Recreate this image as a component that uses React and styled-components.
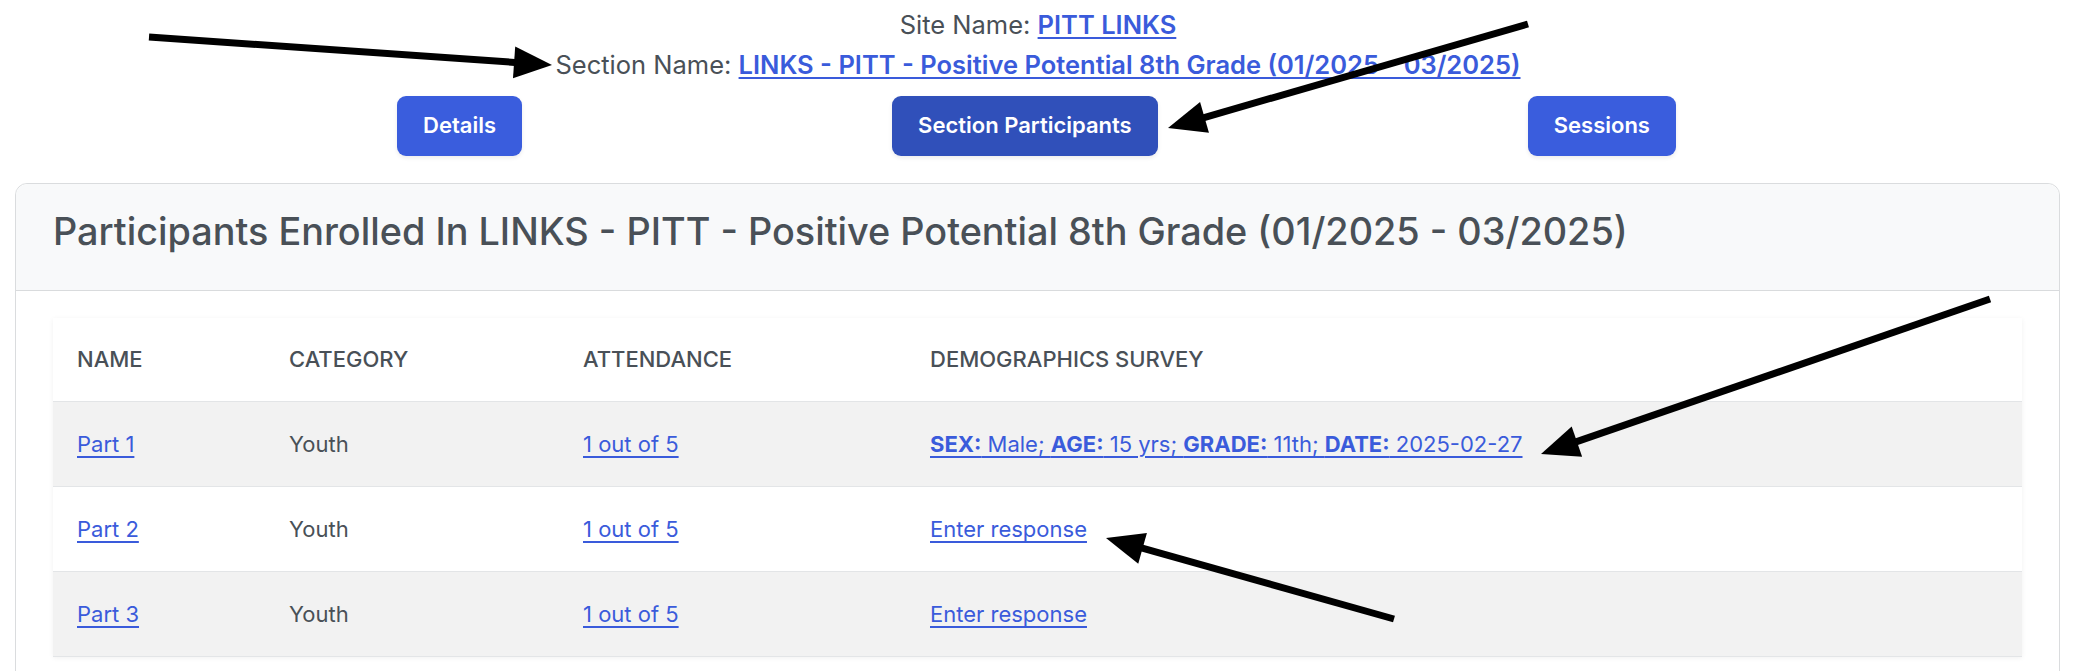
import React from 'react';
import styled, { createGlobalStyle } from 'styled-components';

const GlobalStyle = createGlobalStyle`
  body {
    margin: 0;
    background: #fff;
    font-family: Inter, "Noto Sans", sans-serif;
    color: #495057;
  }
`;

const StyledPage = styled.div`
  position: relative;
  width: 100%;
  padding-top: 5px;
  overflow: hidden;
`;

const StyledInfo = styled.div`
  text-align: center;
  font-size: 25.5px;
  line-height: 40px;
  color: #495057;
`;

const StyledInfoLink = styled.a`
  color: #3a5bdb;
  font-weight: 600;
  text-decoration: underline;
  text-underline-offset: 3px;
  text-decoration-thickness: 2px;
`;

const StyledNav = styled.div`
  display: flex;
  justify-content: space-evenly;
  margin: 11px 30px 0 27px;
`;

const StyledNavButton = styled.a`
  display: inline-block;
  padding: 14px 26px;
  font-size: 22px;
  line-height: 31.5px;
  font-weight: 600;
  color: #fff;
  border-radius: 9px;
  background: ${({ $active }) => ($active ? '#3050ba' : '#3a5ddd')};
  box-shadow: 0 2px 4px rgba(0, 0, 0, 0.08);
  text-decoration: none;
`;

const StyledCard = styled.div`
  margin: 27px 16px 0 15px;
  border: 1.5px solid #dadcde;
  border-radius: 12px;
  background: #fff;
`;

const StyledCardHeader = styled.div`
  background: #f8f9fa;
  border-bottom: 1.5px solid #d9dbdd;
  border-radius: 12px 12px 0 0;
  padding: 24px 37px 0;
  height: 107px;
  box-sizing: border-box;
`;

const StyledTitle = styled.h2`
  margin: 0;
  font-size: 37.8px;
  line-height: 46px;
  font-weight: 500;
  color: #495057;
`;

const StyledCardBody = styled.div`
  padding: 27px 37px 40px;
`;

const StyledTable = styled.table`
  width: 100%;
  border-collapse: collapse;
  box-shadow: 0 1px 5px rgba(0, 0, 0, 0.06);
  font-size: 22px;
  table-layout: fixed;
`;

const StyledHeadCell = styled.th`
  text-align: left;
  font-weight: 500;
  text-transform: uppercase;
  color: #495057;
  height: 84px;
  padding: 0 24px;
  box-sizing: border-box;
  width: ${({ $width }) => $width || 'auto'};
  border-bottom: 1.5px solid #e3e5e7;
`;

const StyledRow = styled.tr`
  background: ${({ $striped }) => ($striped ? '#f2f2f2' : '#fff')};
`;

const StyledCell = styled.td`
  height: 85px;
  padding: 0 24px;
  box-sizing: border-box;
  color: #495057;
  border-bottom: 1.5px solid #e3e5e7;
`;

const StyledLink = styled.a`
  color: #3a5bdb;
  text-decoration: underline;
  text-underline-offset: 4px;
  text-decoration-thickness: 2px;

  b {
    font-weight: 700;
  }
`;

const StyledArrows = styled.svg`
  position: absolute;
  left: 0;
  top: 0;
  pointer-events: none;
`;

const rows = [
  { name: 'Part 1', survey: true },
  { name: 'Part 2' },
  { name: 'Part 3' }
];

const Arrow = ({ x1, y1, x2, y2 }) => {
  const dx = x2 - x1;
  const dy = y2 - y1;
  const len = Math.sqrt(dx * dx + dy * dy);
  const ux = dx / len;
  const uy = dy / len;
  const headLen = 38;
  const headHalf = 16;
  const bx = x2 - ux * headLen;
  const by = y2 - uy * headLen;
  const p1 = `${bx - uy * headHalf},${by + ux * headHalf}`;
  const p2 = `${bx + uy * headHalf},${by - ux * headHalf}`;
  return (
    <g>
      <line x1={x1} y1={y1} x2={bx + ux * 4} y2={by + uy * 4} stroke="#000" strokeWidth="7" />
      <polygon points={`${x2},${y2} ${p1} ${p2}`} fill="#000" />
    </g>
  );
};

const Survey = () => (
  <StyledLink href="#">
    <b>SEX:</b> Male; <b>AGE:</b> 15 yrs; <b>GRADE:</b> 11th; <b>DATE:</b> 2025-02-27
  </StyledLink>
);

const App = () => {
  return (
    <StyledPage>
      <GlobalStyle />
      <StyledInfo>
        <div>
          Site Name: <StyledInfoLink href="#">PITT LINKS</StyledInfoLink>
        </div>
        <div>
          Section Name:{' '}
          <StyledInfoLink href="#">
            LINKS - PITT - Positive Potential 8th Grade (01/2025 - 03/2025)
          </StyledInfoLink>
        </div>
      </StyledInfo>

      <StyledNav>
        <StyledNavButton href="#">Details</StyledNavButton>
        <StyledNavButton href="#" $active>Section Participants</StyledNavButton>
        <StyledNavButton href="#">Sessions</StyledNavButton>
      </StyledNav>

      <StyledCard>
        <StyledCardHeader>
          <StyledTitle>
            Participants Enrolled In LINKS - PITT - Positive Potential 8th Grade (01/2025 - 03/2025)
          </StyledTitle>
        </StyledCardHeader>
        <StyledCardBody>
          <StyledTable>
            <thead>
              <tr>
                <StyledHeadCell $width="212px">Name</StyledHeadCell>
                <StyledHeadCell $width="294px">Category</StyledHeadCell>
                <StyledHeadCell $width="347px">Attendance</StyledHeadCell>
                <StyledHeadCell>Demographics Survey</StyledHeadCell>
              </tr>
            </thead>
            <tbody>
              {rows.map((row, i) => (
                <StyledRow key={row.name} $striped={i % 2 === 0}>
                  <StyledCell>
                    <StyledLink href="#">{row.name}</StyledLink>
                  </StyledCell>
                  <StyledCell>Youth</StyledCell>
                  <StyledCell>
                    <StyledLink href="#">1 out of 5</StyledLink>
                  </StyledCell>
                  <StyledCell>
                    {row.survey ? <Survey /> : <StyledLink href="#">Enter response</StyledLink>}
                  </StyledCell>
                </StyledRow>
              ))}
            </tbody>
          </StyledTable>
        </StyledCardBody>
      </StyledCard>

      <StyledArrows width="2076" height="671" viewBox="0 0 2076 671">
        <Arrow x1={149} y1={37} x2={552} y2={65} />
        <Arrow x1={1528} y1={24} x2={1168} y2={128} />
        <Arrow x1={1990} y1={299} x2={1541} y2={454} />
        <Arrow x1={1394} y1={619} x2={1106} y2={538} />
      </StyledArrows>
    </StyledPage>
  );
};

export default App;
